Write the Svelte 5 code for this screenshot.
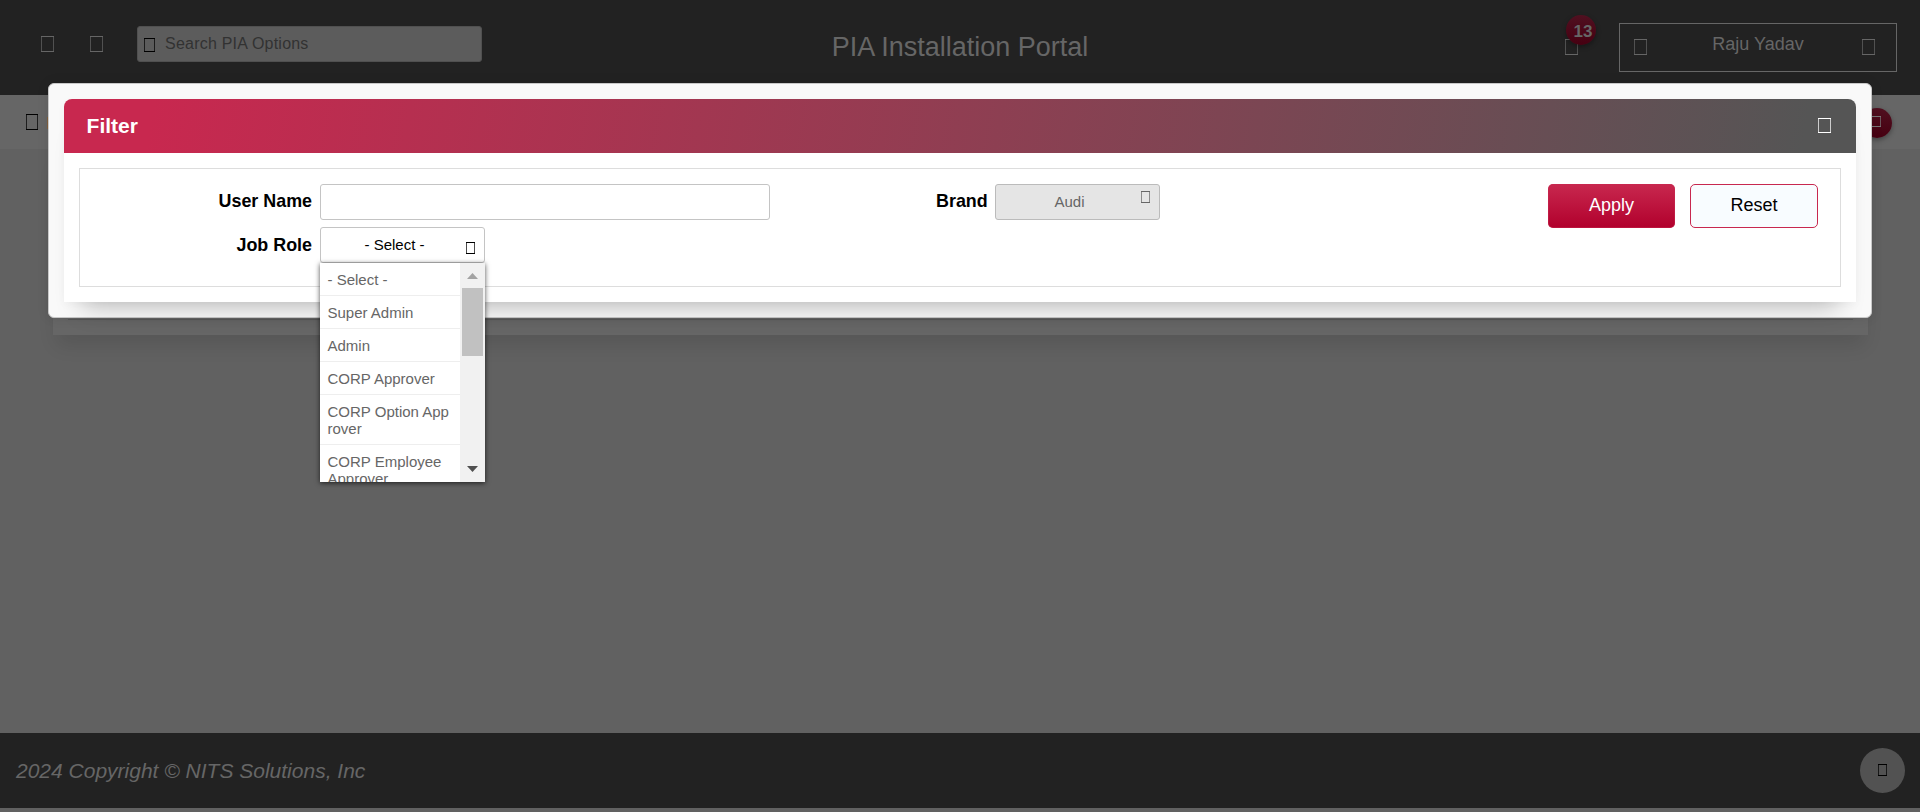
<script>
  const roles = ['- Select -', 'Super Admin', 'Admin', 'CORP Approver', 'CORP Option Approver', 'CORP Employee Approver'];
</script>

{#snippet glyph(w, h, name)}
  <svg class="glyph {name}" width={w} height={h} viewBox="0 0 {w} {h}" aria-hidden="true">
    <path d="M0 .5H{w}M0 {h - 0.5}H{w}" stroke="currentColor" />
    <path d="M.5 1V{h - 1}M{w - 0.5} 1V{h - 1}" stroke="currentColor" opacity=".7" />
  </svg>
{/snippet}

<div class="page">
  <header class="topbar">
    <div class="left">
      {@render glyph(13, 16, 'menu')}
      {@render glyph(13, 16, 'home')}
      <div class="search">{@render glyph(11, 14, 'find')}<span>Search PIA Options</span></div>
    </div>
    <h1>PIA Installation Portal</h1>
    <div class="right">
      <div class="bell">{@render glyph(13, 16, 'ring')}<span class="count">13</span></div>
      <div class="user">
        {@render glyph(13, 16, 'person')}
        <span>Raju Yadav</span>
        {@render glyph(13, 16, 'caret')}
      </div>
    </div>
  </header>
  <div class="crumbs">
    {@render glyph(12, 16, 'crumb')}
    <i class="sliver"></i>
    <div class="round">{@render glyph(11, 11, 'add')}</div>
  </div>
  <main><div class="under"><div class="under-line"></div></div></main>
  <footer>
    <em>2024 Copyright © NITS Solutions, Inc</em>
    <div class="top">{@render glyph(9, 12, 'up')}</div>
  </footer>

  <section class="modal">
    <div class="panel">
      <div class="head"><h2>Filter</h2>{@render glyph(13, 15, 'close')}</div>
      <div class="content">
        <div class="form">
          <div class="col names">
            <div class="row"><b>User Name</b><div class="input"></div></div>
            <div class="row">
              <b class="job">Job Role</b>
              <div class="select">
                <span>- Select -</span>
                {@render glyph(9, 12, 'down')}
                <div class="menu-list">
                  <div class="options">
                    {#each roles as role}<div class="option">{role}</div>{/each}
                  </div>
                  <div class="scroll">
                    <svg width="25" height="25"><path d="M7 16h11l-5.500-6z" fill="#a3a3a3" /></svg>
                    <div class="thumb"></div>
                    <svg class="last" width="25" height="25"><path d="M7 9h11l-5.500 6z" fill="#505050" /></svg>
                  </div>
                </div>
              </div>
            </div>
          </div>
          <div class="col brand">
            <div class="row"><b>Brand</b><div class="select disabled"><span>Audi</span>{@render glyph(9, 12, 'down')}</div></div>
          </div>
          <div class="buttons"><button class="apply">Apply</button><button class="reset">Reset</button></div>
        </div>
      </div>
    </div>
  </section>
</div>

<style>
  :global(body) { margin: 0; overflow: hidden; }
  .page, .page * { box-sizing: border-box; }
  .page { position: relative; display: flex; flex-direction: column; width: 1920px; height: 812px; background: #616161; font-family: "Liberation Sans", Arial, sans-serif; overflow: hidden; }
  .glyph { display: block; flex: none; }
  h1, h2 { margin: 0; }

  .topbar { display: grid; grid-template-columns: 1fr auto 1fr; height: 95px; background: #222; color: #666; flex: none; }
  .left { display: flex; align-items: flex-start; padding: 26px 0 0 41px; }
  .menu, .home { margin-top: 10px; }
  .home { margin-left: 36px; }
  .search { display: flex; width: 345px; height: 36px; margin-left: 34px; padding: 0 6px; background: #5c5c5c; border: 1px solid #505050; border-radius: 3px; color: #323232; font-size: 16px; line-height: 33px; letter-spacing: .22px; }
  .find { margin-top: 11px; color: #000; }
  .search span { margin-left: 10px; }
  h1 { padding-top: 31px; font-size: 27px; font-weight: 400; line-height: 32px; }
  .right { display: flex; justify-content: flex-end; padding: 15px 23px 0 0; }
  .bell { position: relative; width: 31px; height: 40px; margin-right: 23px; }
  .ring { margin-top: 24px; }
  .count { position: absolute; left: 1px; top: 0; width: 30px; height: 30px; padding-left: 4px; border-radius: 50%; background: linear-gradient(#501020, #460011); box-shadow: 0 2px 5px rgba(0,0,0,.35); font-size: 17px; font-weight: 700; line-height: 33px; text-align: center; }
  .user { display: flex; justify-content: space-between; width: 278px; height: 49px; margin-top: 8px; padding: 15px 21px 0 14px; border: 1px solid #666; font-size: 18px; line-height: 10px; }
  .user span { margin-right: -7px; }

  .crumbs { display: flex; height: 54px; flex: none; background: #666; padding: 19px 28px 0 26px; }
  .crumb { color: #000; }
  .sliver { width: 1px; height: 12px; margin: 3px 0 0 9px; background: #80603f; }
  .round { width: 30px; height: 30px; margin: -6px 0 0 auto; padding: 8px; border-radius: 50%; background: linear-gradient(#501020, #460011); box-shadow: 0 2px 5px rgba(0,0,0,.35); color: #777; }

  main { flex: 1; padding: 0 52px 0 53px; }
  .under { height: 186px; padding: 0 15px; background: #666; box-shadow: 0 14px 18px -4px rgba(0,0,0,.11); }
  .under-line { height: 171px; border-bottom: 1px solid #575757; }
  footer { display: flex; justify-content: space-between; height: 75px; flex: none; margin-bottom: 4px; padding: 15px 15px 0 16px; background: #222; color: #666; }
  em { font-size: 21px; line-height: 46px; }
  .top { display: flex; align-items: flex-start; justify-content: center; width: 45px; height: 45px; padding-top: 16px; border-radius: 50%; background: #525252; color: #000; }

  .modal { position: absolute; left: 48px; top: 83px; width: 1824px; height: 235px; padding: 15px; background: #f9f9f9; border: 1px solid #c8c8c8; border-radius: 6px; box-shadow: 0 0 12px rgba(0,0,0,.1); }
  .panel { height: 203px; background: #fff; border-radius: 8px 8px 0 0; box-shadow: 0 22px 24px -18px rgba(0,0,0,.26), 0 3px 10px rgba(0,0,0,.03); }
  .head { display: flex; justify-content: space-between; height: 54px; padding: 0 25px 0 22px; border-radius: 8px 8px 0 0; background: linear-gradient(100deg, #c8284f 5%, #555 97%); color: #fff; }
  h2 { padding-left: .6px; font-size: 21px; line-height: 54px; }
  .close { margin-top: 19px; }
  .content { padding: 15px; }
  .form { display: flex; height: 119px; padding: 15px 22px 0 0; border: 1px solid #ddd; }
  .row { display: flex; height: 36px; margin-bottom: 7px; }
  .names { width: 690px; }
  .names b { width: 240px; padding-right: 8px; }
  .brand { margin-left: 166px; }
  .brand b { width: 59px; padding-right: 8px; }
  b { color: #000; text-align: right; font-size: 17.900px; line-height: 34px; }
  .names .job { line-height: 36px; }
  .input { width: 450px; height: 36px; border: 1px solid #c4c4c4; border-radius: 3px; background: #fff; }
  .select { position: relative; display: flex; width: 165px; height: 36px; padding: 0 9px 0 0; border: 1px solid #c4c4c4; border-radius: 3px; background: #fff; font-size: 15px; line-height: 34px; }
  .select > span { flex: 1; padding-left: 2px; text-align: center; }
  .down { margin-top: 14px; }
  .disabled { background: #e5e5e5; color: #666; border-color: #bbb; }
  .disabled .down { margin-top: 6px; }
  .menu-list { position: absolute; z-index: 2; left: -1px; top: 35px; display: flex; width: 165px; height: 219px; background: #fff; box-shadow: 0 1px 5px rgba(0,0,0,.7); overflow: hidden; }
  .options { width: 140px; height: 219px; overflow: hidden; }
  .option { padding: 8px 7px 7px 7.500px; border-bottom: 1px solid #eee; color: #666; font-size: 15px; line-height: 17px; word-break: break-all; }
  .option:last-child { word-break: normal; }
  .scroll { display: flex; flex-direction: column; width: 25px; background: #f1f1f1; }
  .thumb { width: 21px; height: 68px; margin-left: 2px; background: #c1c1c1; }
  .last { margin-top: auto; }
  .buttons { display: flex; gap: 15px; margin-left: auto; }
  button { height: 44px; padding: 0 0 1px; border-radius: 5px; font: 18px "Liberation Sans", Arial, sans-serif; }
  .apply { width: 127px; border: 0; background: linear-gradient(#c8284f, #b1002c); box-shadow: inset 0 0 0 1px rgba(200,40,79,.5); color: #fff; }
  .reset { width: 128px; border: 1px solid #c8284f; background: #f8fcff; color: #000; }
</style>
